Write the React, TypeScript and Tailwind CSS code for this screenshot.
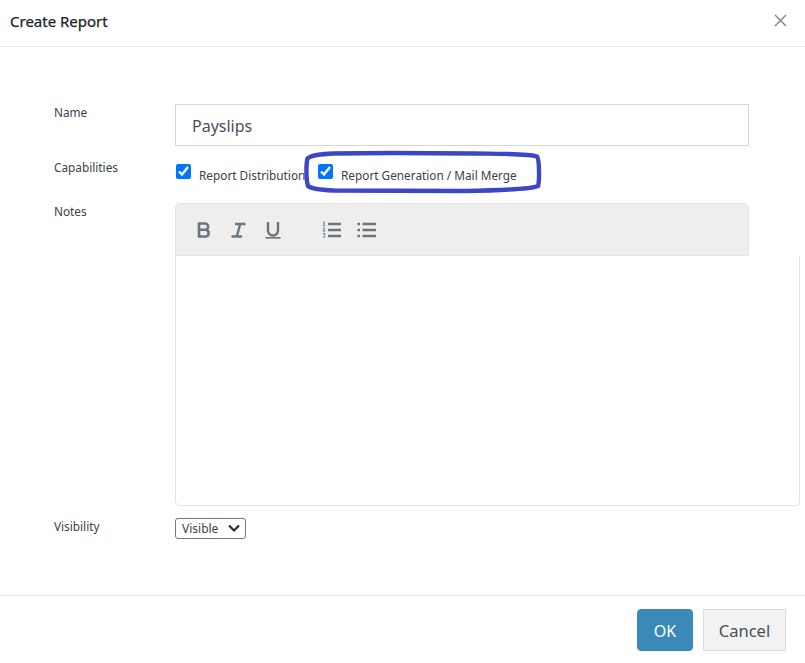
import React from "react";

const font = { fontFamily: '"Noto Sans", "Open Sans", sans-serif' };

function Toolbar() {
  return (
    <div className="flex h-[53px] w-[574px] items-center rounded-t-[5px] border border-[#e3e3e3] bg-[#eeeeee] pl-[20px] text-[#6c757d]">
      <svg width="16" height="16" viewBox="0 0 16 16" className="mr-[19px]" fill="none" stroke="currentColor" strokeWidth="2.600">
        <path d="M3 1.500h6a3.100 3.100 0 0 1 0 6.300H3zM3 7.800h6.800a3.400 3.400 0 0 1 0 6.700H3z" />
      </svg>
      <svg width="15" height="16" viewBox="0 0 15 16" className="mr-[19px]" fill="none" stroke="currentColor" strokeWidth="2.400">
        <path d="M4 2h10.500M.5 14.500h10.500M9.200 2 5.800 14.500" />
      </svg>
      <svg width="16" height="18" viewBox="0 0 16 18" className="mr-[41px]" fill="none" stroke="currentColor">
        <path d="M3 1v8.500a5 5 0 0 0 10 0V1" strokeWidth="2.400" />
        <path d="M0.500 16.800h15" strokeWidth="1.600" />
      </svg>
      <svg width="19" height="18" viewBox="0 0 19 18" className="mr-[16px]" fill="none">
        <path d="M6 3h13M6 9h13M6 15h13" stroke="currentColor" strokeWidth="2.500" />
        <path d="M1 1.300 2 .8v4M.8 4.800h2.400M.8 7.200c1.800-1 2.800.4 0 2.800h2.500M.8 12.700h2.200l-1 1.300c1.600 0 1.600 2.600-1.200 2.300" stroke="currentColor" strokeWidth="1" />
      </svg>
      <svg width="19" height="16" viewBox="0 0 19 16" fill="none">
        <path d="M5.500 2h13.500M5.500 8h13.500M5.500 14h13.500" stroke="currentColor" strokeWidth="2.500" />
        <path d="M.5 2h2.500M.5 8h2.500M.5 14h2.500" stroke="currentColor" strokeWidth="2.500" />
      </svg>
    </div>
  );
}

export default function App() {
  return (
    <div className="relative flex h-[663px] w-[805px] flex-col overflow-hidden bg-white text-[#212529]" style={font}>
      <header className="flex h-[47px] shrink-0 items-start justify-between border-b border-[#e9e9e9] pl-[10px] pr-[18px]">
        <h1 className="pt-[1px] text-[15px] leading-[40px] font-normal text-[#1d2125] [-webkit-text-stroke:0.25px_#1d2125]">Create Report</h1>
        <svg width="13" height="13" viewBox="0 0 13 13" className="mt-[14px]" stroke="#7b8288" strokeWidth="1.400" fill="none">
          <path d="M1 1l11 11M12 1 1 12" />
        </svg>
      </header>

      <main className="flex-1 pl-[54px] pt-[57px]">
        <div className="flex h-[42px] items-start">
          <label className="w-[121px] text-[11.800px] leading-[17px] text-[#3c4248]">Name</label>
          <input
            readOnly
            value="Payslips"
            className="h-[42px] w-[574px] border border-[#d4d6de] pl-[16px] pt-[1px] text-[16px] text-[#495057] outline-none"
          />
        </div>

        <div className="mt-[15px] flex h-[42px] items-start">
          <label className="mt-[-2px] w-[121px] text-[11.800px] leading-[17px] text-[#3c4248]">Capabilities</label>
          <div className="flex items-start">
            <input type="checkbox" readOnly checked className="mt-[3px] ml-[1px] h-[15px] w-[15px] accent-[#0075ff]" />
            <span className="mt-[6px] ml-[8px] w-[112px] text-[11.800px] leading-[17px] whitespace-nowrap text-[#3c4248]">
              Report Distribution
            </span>
            <input type="checkbox" readOnly checked className="mt-[3px] ml-[7px] h-[15px] w-[15px] accent-[#0075ff]" />
            <span className="mt-[6px] ml-[8px] text-[11.800px] leading-[17px] whitespace-nowrap text-[#3c4248]">
              Report Generation / Mail Merge
            </span>
          </div>
        </div>

        <div className="flex items-start">
          <label className="w-[121px] text-[11.800px] leading-[17px] text-[#3c4248]">Notes</label>
          <div>
            <Toolbar />
            <div className="h-[250px] w-[625px] rounded-b-[5px] border border-t-0 border-[#e3e3e3]" />
          </div>
        </div>

        <div className="mt-[12px] flex items-start">
          <label className="w-[121px] text-[11.800px] leading-[17px] text-[#3c4248]">Visibility</label>
          <div className="relative h-[21px] w-[71px]">
            <select className="block h-[21px] w-[71px] appearance-none rounded-[3px] border border-[#767676] bg-white pl-[6px] text-[12px] text-[#3c4248]">
              <option>Visible</option>
            </select>
            <svg className="pointer-events-none absolute right-[6px] top-[6px]" width="12" height="9" viewBox="0 0 12 9" fill="none" stroke="#2b2b2b" strokeWidth="2.200">
              <path d="M1 1.500 6 6.500 11 1.500" />
            </svg>
          </div>
        </div>
      </main>

      <footer className="flex h-[68px] shrink-0 items-start justify-end gap-[10px] border-t border-[#e9e9e9] pr-[19px] pt-[13px]">
        <button className="h-[42px] w-[56px] rounded-[4px] border border-[#3a89b8] bg-[#3a89b8] pt-[2px] text-[16px] text-white">OK</button>
        <button className="h-[42px] w-[83px] border border-[#dcdcdc] bg-[#f2f2f2] pt-[2px] text-[16.500px] text-[#495057]">Cancel</button>
      </footer>

      <svg className="pointer-events-none absolute left-[304px] top-[150px]" width="240" height="45" viewBox="0 0 240 45" fill="none">
        <path
          d="M30 3.500C60 2.800 130 3 170 3.500C195 3.800 224 3.500 233 6.500C235.500 9 235.500 32 234 36C226 39.500 190 40.500 160 41C110 41 60 41 30 40.500C20 40 8 39.500 4 36C2 30 2 14 3.500 8.500C8 4.500 20 4 30 3.500Z"
          stroke="#3d46c4"
          strokeWidth="4.400"
        />
      </svg>
    </div>
  );
}
